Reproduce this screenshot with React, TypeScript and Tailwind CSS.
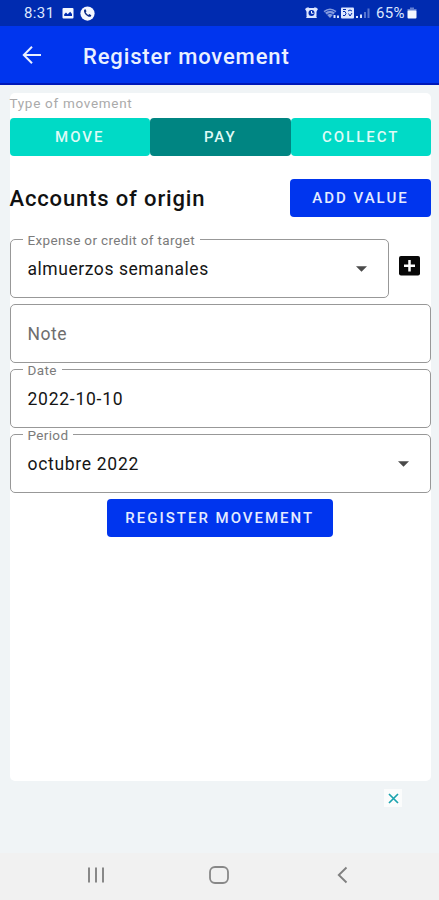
import { useState, type ReactNode } from "react";

const MOVEMENT_TYPES = ["MOVE", "PAY", "COLLECT"];

// Android status bar with clock, notifications and battery
function StatusBar() {
  return (
    <div className="flex h-[26px] shrink-0 items-center justify-between bg-[#002bb0] pl-6 pr-[22px] text-[#dce6ff]">
      <div className="flex items-center">
        <span className="w-[31px] text-[15px] leading-none tracking-[0.4px] whitespace-nowrap">8:31</span>
        <svg className="ml-[7px] h-3 w-3" viewBox="0 0 12 12">
          <rect x="0.5" y="1" width="11" height="10.5" rx="1" fill="#f4f7ff" />
          <path d="M2.2 9V7.2L4 5.4l1.7 1.8L8.2 4.8 10 7v2z" fill="#002bb0" />
        </svg>
        <svg className="ml-[6px] h-[15px] w-[15px]" viewBox="0 0 16 16">
          <circle cx="8" cy="8" r="7.6" fill="#f4f7ff" />
          <path
            d="M4.3 4.4c.6-1 1.4-1.1 1.8-.4l.7 1.3c.2.5-.5 1-.7 1.3.5 1.2 1.6 2.3 2.9 2.9.4-.3.8-1 1.3-.8l1.4.8c.7.5.3 1.3-.6 1.9-2.3 1-7.5-3.6-6.8-7z"
            fill="#0c2a86"
          />
        </svg>
      </div>
      <div className="flex items-center">
        <svg className="h-3 w-[13px]" viewBox="0 0 13 12">
          <path d="M0 2l2-1.500h2V3L1.500 4.500zM13 2l-2-1.500H9V3l2.500 1.500zM1 11l1.500-2.500h8L12 11z" fill="currentColor" />
          <rect x="1.500" y="1" width="10" height="10" rx="2.500" fill="currentColor" />
          <circle cx="6.500" cy="6" r="3" fill="#002bb0" />
          <path d="M6.500 4v2.300h2" fill="none" stroke="#f4f7ff" />
        </svg>
        <svg className="ml-[5px] h-3 w-[17px]" viewBox="0 0 17 12">
          <path d="M0.500 4Q7 -1 13.500 4L7 11z" fill="currentColor" opacity="0.6" />
          <path d="M2 5.300q5-3.800 10 0M4 7.500q3-2.500 6 0" fill="none" stroke="#002bb0" strokeWidth="0.8" />
          <path d="M10.500 8h2v3h-2zM14 8.500h2V11h-2z" fill="currentColor" />
        </svg>
        <svg className="ml-px h-3 w-[14px]" viewBox="0 0 14 12">
          <rect x="0" y="0.500" width="13" height="11" rx="1" fill="currentColor" />
          <path d="M2 2.500h3M2 4.500h2l1 2-1 2H2M7 4q2-2 4 0M7.500 6.500l1.500 2.500 2-3" fill="none" stroke="#002bb0" strokeWidth="1" />
        </svg>
        <svg className="h-3 w-[15px]" viewBox="0 0 15 12">
          <path d="M1 9h2v2H1zM5 7.500h2V11H5z" fill="currentColor" />
          <path d="M9 5h2v6H9zM12.500 1.500h2V11h-2z" fill="currentColor" opacity="0.4" />
        </svg>
        <span className="ml-[6px] w-[30px] text-[15px] leading-none tracking-[0.3px] whitespace-nowrap">65%</span>
        <svg className="ml-px h-3 w-[10px]" viewBox="0 0 10 12">
          <path d="M3 0.500h4V2h2.500v2h-9V2H3z" fill="currentColor" opacity="0.45" />
          <rect x="0.500" y="3.500" width="9" height="8" rx="1" fill="#f4f7ff" />
        </svg>
      </div>
    </div>
  );
}

function AppBar() {
  return (
    <header className="flex h-[59px] shrink-0 items-center border-b-2 border-[#0019b8] bg-[#0035ee] pl-[22px] text-[#eaf0ff]">
      <svg className="h-5 w-5" viewBox="0 0 20 20" fill="none" stroke="currentColor" strokeWidth="2">
        <path d="M19 10H2M10 1.800L1.800 10l8.200 8.200" />
      </svg>
      <h1 className="ml-[41px] pt-[3px] text-[22px] font-medium tracking-[0.86px]">Register movement</h1>
    </header>
  );
}

function DropdownArrow() {
  return (
    <svg className="h-[6px] w-[11px]" viewBox="0 0 11 6">
      <path d="M0 0.300h11L5.500 5.800z" fill="#4a4a4a" />
    </svg>
  );
}

interface OutlinedFieldProps {
  label?: string;
  arrow?: boolean;
  className?: string;
  children: ReactNode;
}

// Outlined text field, the label sits in a notch of the top border
function OutlinedField({ label, arrow, className = "", children }: OutlinedFieldProps) {
  return (
    <fieldset
      className={`min-w-0 rounded-[5px] border border-[#989898] pl-[12px] ${
        label ? "-mt-[7px] h-[66px]" : "h-[59px]"
      } ${className}`}
    >
      {label && (
        <legend className="-mb-[6px] h-[14px] px-[5px] text-[13.5px] leading-[17px] tracking-[0.35px] whitespace-nowrap text-[#7b7b7b]">
          {label}
        </legend>
      )}
      <div className="flex h-[58px] items-center justify-between pl-[5px] pr-[21px] text-[17.5px] tracking-[0.55px] text-[#151515]">
        {children}
        {arrow && <DropdownArrow />}
      </div>
    </fieldset>
  );
}

export default function App() {
  const [type, setType] = useState("PAY");

  return (
    <div className="flex h-[900px] w-[439px] flex-col overflow-hidden bg-[#f0f4f6] font-['Roboto',sans-serif]">
      <StatusBar />
      <AppBar />

      <main className="ml-[9.5px] mr-2 mt-2 flex h-[688px] shrink-0 flex-col rounded-[5px] bg-white">
        <p className="mt-[2px] h-[23px] text-[13.5px] leading-[16px] tracking-[0.7px] text-[#aaaaaa]">
          Type of movement
        </p>

        {/* Movement type */}
        <div className="flex h-[38px]">
          {MOVEMENT_TYPES.map((item) => (
            <button
              key={item}
              onClick={() => setType(item)}
              className={`flex-1 rounded-[4px] pt-px text-[15px] font-medium tracking-[2px] text-[#dffaf6] ${
                type === item ? "bg-[#008582]" : "bg-[#00dac6]"
              }`}
            >
              {item}
            </button>
          ))}
        </div>

        <div className="mt-[23px] flex h-[38px] items-center justify-between">
          <h2 className="pt-px text-[22px] font-medium tracking-[0.85px] text-[#111111]">Accounts of origin</h2>
          <button className="h-[38px] w-[141px] rounded-[4px] bg-[#0035ee] pt-px text-[15px] font-medium tracking-[2px] text-[#e4ebff]">
            ADD VALUE
          </button>
        </div>

        {/* Movement details */}
        <div className="mt-[22px] flex flex-col gap-[6px]">
          <div className="flex">
            <OutlinedField label="Expense or credit of target" arrow className="w-[379px]">
              <span>almuerzos semanales</span>
            </OutlinedField>
            <button className="ml-[10px] mt-[17px] h-5 w-[21px]">
              <svg className="h-5 w-[21px]" viewBox="0 0 21 20">
                <rect width="21" height="19.500" rx="2" fill="#080808" />
                <path d="M10.500 4v11.500M5 9.700h11" stroke="#fff" strokeWidth="2.500" />
              </svg>
            </button>
          </div>
          <OutlinedField>
            <span className="text-[#6e6e6e]">Note</span>
          </OutlinedField>
          <OutlinedField label="Date">
            <span className="tracking-[0.75px]">2022-10-10</span>
          </OutlinedField>
          <OutlinedField label="Period" arrow>
            <span className="tracking-[0.7px]">octubre 2022</span>
          </OutlinedField>
        </div>

        <button className="mt-[6px] mr-px h-[38px] w-[226px] shrink-0 self-center rounded-[4px] bg-[#0035ee] pt-px text-[15px] font-medium tracking-[2px] text-[#e4ebff]">
          REGISTER MOVEMENT
        </button>
      </main>

      {/* Ad banner */}
      <div className="flex h-[72px] shrink-0 items-start justify-end pr-[37px] pt-2">
        <button className="flex h-[18px] w-[18px] items-center justify-center bg-white/70">
          <svg className="h-[11px] w-[11px]" viewBox="0 0 11 11">
            <path d="M1 1l9 9M10 1l-9 9" stroke="#1ba3ae" strokeWidth="1.700" />
          </svg>
        </button>
      </div>

      {/* System navigation */}
      <nav className="flex h-[47px] items-center bg-[#f1f1f1] pb-[3px] pl-[86px] pr-[91px]">
        <svg className="h-[18px] w-[18px]" viewBox="0 0 18 18" stroke="#888888" strokeWidth="2">
          <path d="M3 1.500v15M10 1.500v15M17 1.500v15" />
        </svg>
        <svg className="ml-[105px] h-[18px] w-5" viewBox="0 0 20 18" fill="none" stroke="#888888" strokeWidth="1.800">
          <rect x="1" y="1" width="18" height="16" rx="5" />
        </svg>
        <svg className="ml-auto h-[18px] w-[11px]" viewBox="0 0 11 18" fill="none" stroke="#808080" strokeWidth="1.900">
          <path d="M9.500 1.500L1.800 9l7.700 7.500" />
        </svg>
      </nav>
    </div>
  );
}
